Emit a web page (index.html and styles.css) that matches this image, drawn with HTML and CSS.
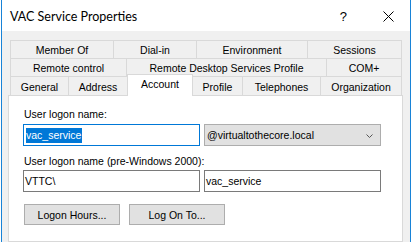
FILE: index.html
```html
<!DOCTYPE html>
<html>
  <head>
    <meta name="viewport" content="width=device-width, initial-scale=1.0" />
    <link rel="stylesheet" href="styles.css">
  </head>

  <body>
    <div class="window">
      <div class="titlebar">
        <span class="title">VAC Service Properties</span>
        <span class="help">?</span>
        <svg class="close" width="11" height="11" viewBox="0 0 11 11">
          <path d="M0.5 0.5 L10.5 10.5 M10.5 0.5 L0.5 10.5" stroke="#000" stroke-width="1" fill="none" />
        </svg>
      </div>

      <div class="dialog">
        <div class="tabs">
          <div class="tab-row row-1">
            <div class="tab">Member Of</div>
            <div class="tab">Dial-in</div>
            <div class="tab">Environment</div>
            <div class="tab">Sessions</div>
          </div>
          <div class="tab-row row-2">
            <div class="tab">Remote control</div>
            <div class="tab">Remote Desktop Services Profile</div>
            <div class="tab">COM+</div>
          </div>
          <div class="tab-row row-3">
            <div class="tab">General</div>
            <div class="tab">Address</div>
            <div class="tab active">Account</div>
            <div class="tab">Profile</div>
            <div class="tab">Telephones</div>
            <div class="tab">Organization</div>
          </div>
        </div>

        <div class="panel">
          <div class="label first">User logon name:</div>
          <div class="field-row">
            <div class="field focused"><span class="selected">vac_service</span></div>
            <div class="field combo">
              <span>@virtualtothecore.local</span>
              <svg class="chevron" width="7" height="4" viewBox="0 0 7 4">
                <path d="M0.5 0.5 L3.5 3.5 L6.5 0.5" stroke="#555" stroke-width="1" fill="none" />
              </svg>
            </div>
          </div>

          <div class="label">User logon name (pre-Windows 2000):</div>
          <div class="field-row">
            <div class="field">VTTC\</div>
            <div class="field">vac_service</div>
          </div>

          <div class="buttons">
            <button type="button" class="btn">Logon Hours...</button>
            <button type="button" class="btn">Log On To...</button>
          </div>
        </div>
      </div>
    </div>
  </body>
</html>
```

FILE: styles.css
```css
body {
  margin: 0;
  background: #fff;
  font-family: 'Liberation Sans', Arial, sans-serif;
  font-size: 10.5px;
  color: #000;
  overflow: hidden;
}

.window {
  box-sizing: border-box;
  margin-left: 1px;
  width: 410px;
  height: 242px;
  border-left: 1px solid #1883d7;
  border-right: 1px solid #1883d7;
  display: flex;
  flex-direction: column;
}

.titlebar {
  height: 31px;
  flex: none;
  background: #fff;
  display: flex;
  align-items: center;
  padding: 0 16px 0 8px;
}

.title {
  font-family: 'Lato', 'Liberation Sans', sans-serif;
  font-size: 12.5px;
  margin-top: 1px;
}

.help {
  margin-left: auto;
  font-size: 13px;
  margin-top: 1px;
}

.close {
  margin-left: 36px;
  margin-top: 1px;
}

.dialog {
  flex: 1;
  background: #f0f0f0;
  padding: 9px 7px 0 6px;
  display: flex;
  flex-direction: column;
  min-height: 0;
}

/* tab strip, three rows */
.tabs {
  margin: 0 1px 0 2px;
}

.tab-row {
  display: grid;
  height: 18px;
}

.row-1 { grid-template-columns: 104px 83px 111px 94px; }
.row-2 { grid-template-columns: 117px 200px 75px; }
.row-3 {
  grid-template-columns: 59px 59px 65px 50px 78px 81px;
  height: 19px;
}

.tab {
  box-sizing: border-box;
  border-top: 1px solid #d9d9d9;
  border-right: 1px solid #d9d9d9;
  background: #f0f0f0;
  display: flex;
  align-items: center;
  justify-content: center;
  white-space: nowrap;
  padding-top: 1px;
}

.tab:first-child {
  border-left: 1px solid #d9d9d9;
}

.tab.active {
  position: relative;
  z-index: 1;
  background: #fff;
  border-left: 1px solid #d9d9d9;
  margin: -2px 0 -1px -1px;
  padding: 0 0 4px 0;
}

.panel {
  flex: 1;
  background: #fff;
  border: 1px solid #d9d9d9;
  padding: 12px 0 0 14px;
}

.label {
  line-height: 13px;
  margin: 9px 0 2px 1px;
}

.label.first {
  margin-top: 0;
  margin-bottom: 3px;
}

.field-row {
  display: flex;
  gap: 4px;
}

.field {
  box-sizing: border-box;
  width: 177px;
  height: 22px;
  border: 1px solid #7a7a7a;
  background: #fff;
  display: flex;
  align-items: center;
  padding-left: 1px;
  white-space: nowrap;
}

.field.focused {
  border-color: #0078d7;
  padding-left: 2px;
}

.selected {
  background: #0078d7;
  color: #fff;
  line-height: 15px;
  padding-right: 1px;
}

.field.combo {
  background: #e1e1e1;
  border-color: #adadad;
  padding: 0 7px 0 2px;
  justify-content: space-between;
}

.chevron {
  margin-top: 2px;
}

.buttons {
  display: flex;
  gap: 9px;
  margin: 12px 0 0 1px;
}

.btn {
  box-sizing: border-box;
  width: 96px;
  height: 21px;
  padding: 0;
  background: #e1e1e1;
  border: 1px solid #adadad;
  font-family: 'Liberation Sans', Arial, sans-serif;
  font-size: 10.5px;
  color: #000;
}
```
